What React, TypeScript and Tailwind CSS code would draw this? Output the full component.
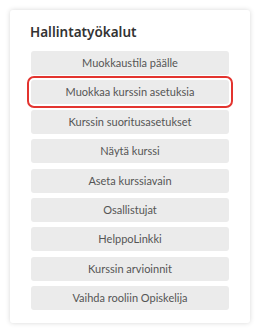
import React from 'react'

const tools: string[] = [
    'Muokkaustila päälle',
    'Muokkaa kurssin asetuksia',
    'Kurssin suoritusasetukset',
    'Näytä kurssi',
    'Aseta kurssiavain',
    'Osallistujat',
    'HelppoLinkki',
    'Kurssin arvioinnit',
    'Vaihda rooliin Opiskelija',
]

const App: React.FC = () => {
    return (
        <div className="bg-white w-[260px] h-[334px] p-[10px] font-['Lato',sans-serif]">
            <div className="w-[240px] h-[313px] bg-white rounded-[3px] shadow-[0_0_5px_rgba(0,0,0,0.16)] pt-[14px] px-[21px]">
                <h2 className="font-['Noto_Sans',sans-serif] text-[13.5px] leading-[16px] font-semibold text-[#333] ml-[-1px] mb-[11px]">Hallintatyökalut</h2>
                <div className="flex flex-col gap-[5.4px]">
                    {tools.map((label, i) => (
                        <button
                            key={label}
                            className={
                                i === 1
                                    ? 'h-[24px] w-full rounded-[3px] bg-[#ebebeb] text-[11px] leading-[24px] text-[#555] outline-2 outline-offset-[2px] outline-[#e3342f]'
                                    : 'h-[24px] w-full rounded-[3px] bg-[#ebebeb] text-[11px] leading-[24px] text-[#555]'
                            }
                        >
                            {label}
                        </button>
                    ))}
                </div>
            </div>
        </div>
    )
}

export default App
